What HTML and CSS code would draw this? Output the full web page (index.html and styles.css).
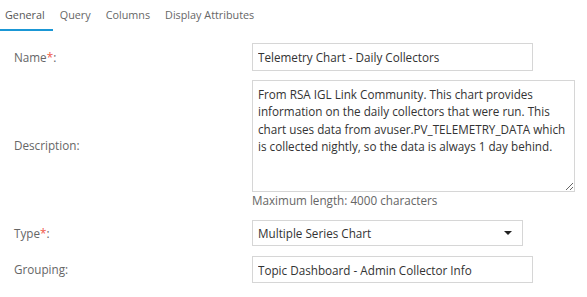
FILE: index.html
```html
<!DOCTYPE html>
<html lang="en">
  <head>
    <meta charset="utf-8" />
    <title>Chart Properties</title>
    <link rel="stylesheet" href="styles.css">
  </head>
  <body>
    <div class="tabs">
      <div class="tab active">General</div>
      <div class="tab">Query</div>
      <div class="tab">Columns</div>
      <div class="tab">Display Attributes</div>
    </div>

    <div class="form">
      <label class="field-label" for="nameInput">Name<span class="req">*</span>:</label>
      <div class="field">
        <input id="nameInput" class="text-input name-input" type="text" value="Telemetry Chart - Daily Collectors" />
      </div>

      <label class="field-label" for="descInput">Description:</label>
      <div class="field">
        <textarea id="descInput" class="text-area">From RSA IGL Link Community. This chart provides information on the daily collectors that were run. This chart uses data from avuser.PV_TELEMETRY_DATA which is collected nightly, so the data is always 1 day behind.</textarea>
        <div class="hint">Maximum length: 4000 characters</div>
      </div>

      <label class="field-label row-type" for="typeInput">Type<span class="req">*</span>:</label>
      <div class="field row-type">
        <div class="select-wrap">
          <select id="typeInput" class="select">
            <option>Multiple Series Chart</option>
          </select>
        </div>
      </div>

      <label class="field-label" for="groupInput">Grouping:</label>
      <div class="field">
        <input id="groupInput" class="text-input group-input" type="text" value="Topic Dashboard - Admin Collector Info" />
      </div>
    </div>
  </body>
</html>
```

FILE: styles.css
```css
* {
  box-sizing: border-box;
}

body {
  margin: 0;
  font-family: "Open Sans", sans-serif;
  font-size: 11.7px;
  color: #333;
  background: #fff;
}

.tabs {
  display: flex;
  height: 31px;
}

.tab {
  padding: 6px 8px 0 7px;
  font-size: 10.8px;
  color: #666;
  line-height: 17px;
}

.tab:first-child {
  padding-left: 5px;
}

.tab.active {
  color: #555;
  border-bottom: 2px solid #1a97d5;
}

.form {
  display: grid;
  grid-template-columns: 252px auto;
  row-gap: 9px;
  margin-top: 12px;
}

.field-label {
  align-self: center;
  padding-left: 14px;
  color: #666;
}

.req {
  color: #f0584a;
}

.row-type {
  margin-top: 2px;
}

.text-input,
.text-area,
.select {
  font-family: "Open Sans", sans-serif;
  font-size: 11.7px;
  color: #333;
  border: 1px solid #d6d6d6;
  background: #fff;
  border-radius: 0;
  outline: none;
}

.text-input {
  display: block;
  padding: 0 5px;
}

.name-input {
  width: 281px;
  height: 28px;
}

.group-input {
  width: 281px;
  height: 27px;
  margin-top: 1px;
}

.text-area {
  display: block;
  width: 323px;
  height: 112px;
  padding: 5px 5px;
  line-height: 17.3px;
  resize: both;
}

.hint {
  line-height: 17px;
  color: #666;
}

.select-wrap {
  position: relative;
  width: 271px;
}

.select {
  display: block;
  width: 100%;
  height: 26px;
  padding: 0 5px;
  appearance: none;
  -webkit-appearance: none;
}

.select-wrap::after {
  content: "";
  position: absolute;
  right: 11px;
  top: 11px;
  border-left: 4px solid transparent;
  border-right: 4px solid transparent;
  border-top: 4px solid #222;
}
```
